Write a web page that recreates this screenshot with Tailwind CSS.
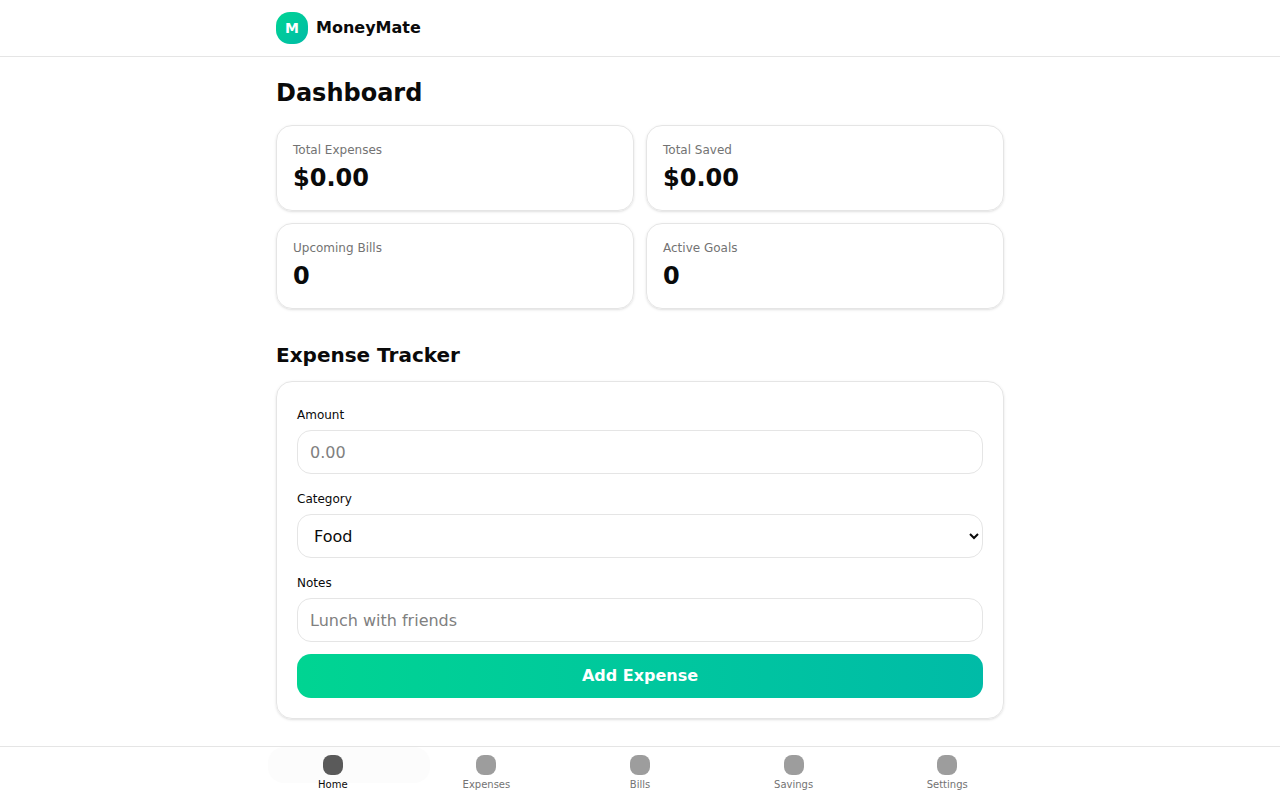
<!DOCTYPE html>
<html lang="en">
<head>
<meta charset="utf-8">
<meta name="viewport" content="width=device-width, initial-scale=1">
<title>MoneyMate</title>
<script src="https://cdn.jsdelivr.net/npm/@tailwindcss/browser@4"></script>
</head>
<body class="bg-white text-neutral-950 font-['DejaVu_Sans',sans-serif]">
  <header class="border-b border-neutral-200">
    <div class="mx-auto flex h-14 max-w-3xl items-center gap-2 px-5">
      <div class="flex size-8 items-center justify-center rounded-[14px] bg-linear-to-br from-emerald-400 to-teal-500 text-sm font-bold text-white">M</div>
      <span class="font-semibold">MoneyMate</span>
    </div>
  </header>

  <main class="mx-auto max-w-3xl px-5 pt-5 pb-20">
    <h1 class="mb-4 text-2xl font-bold">Dashboard</h1>
    <section class="grid grid-cols-2 gap-3">
      <div class="rounded-2xl border border-neutral-200 p-4 shadow-sm">
        <div class="text-xs text-neutral-500">Total Expenses</div>
        <div class="mt-1 text-2xl font-bold">$0.00</div>
      </div>
      <div class="rounded-2xl border border-neutral-200 p-4 shadow-sm">
        <div class="text-xs text-neutral-500">Total Saved</div>
        <div class="mt-1 text-2xl font-bold">$0.00</div>
      </div>
      <div class="rounded-2xl border border-neutral-200 p-4 shadow-sm">
        <div class="text-xs text-neutral-500">Upcoming Bills</div>
        <div class="mt-1 text-2xl font-bold">0</div>
      </div>
      <div class="rounded-2xl border border-neutral-200 p-4 shadow-sm">
        <div class="text-xs text-neutral-500">Active Goals</div>
        <div class="mt-1 text-2xl font-bold">0</div>
      </div>
    </section>

    <h2 class="mt-8 mb-3 text-xl font-semibold">Expense Tracker</h2>
    <form class="grid gap-3 rounded-2xl border border-neutral-200 p-5 shadow-sm">
      <div>
        <div class="mb-1"><label for="amount" class="text-xs">Amount</label></div>
        <input id="amount" type="text" inputmode="decimal" placeholder="0.00" class="block h-11 w-full rounded-[14px] border border-neutral-200 px-3 placeholder:text-[#808080]">
      </div>
      <div>
        <div class="mb-1"><label for="category" class="text-xs">Category</label></div>
        <select id="category" class="block h-11 w-full rounded-[14px] border border-neutral-200 bg-white px-3">
          <option>Food</option>
          <option>Transport</option>
          <option>Shopping</option>
          <option>Other</option>
        </select>
      </div>
      <div>
        <div class="mb-1"><label for="notes" class="text-xs">Notes</label></div>
        <input id="notes" type="text" placeholder="Lunch with friends" class="block h-11 w-full rounded-[14px] border border-neutral-200 px-3 placeholder:text-[#808080]">
      </div>
      <button type="button" class="h-11 rounded-[14px] bg-linear-to-r from-emerald-400 to-teal-500 font-semibold text-white">Add Expense</button>
    </form>
  </main>

  <nav class="fixed inset-x-0 bottom-0 border-t border-neutral-200 bg-white">
    <div class="relative mx-auto grid max-w-3xl grid-cols-5 py-2 text-[10px] leading-[15px]">
      <div class="absolute top-0 left-3 h-9 w-[162px] rounded-2xl bg-[#fcfcfc]"></div>
      <a href="#home" class="relative flex flex-col items-center gap-0.5 text-neutral-950"><span class="size-5 rounded-lg bg-[#5a5a5a]"></span>Home</a>
      <a href="#expenses" class="flex flex-col items-center gap-0.5 text-neutral-500"><span class="size-5 rounded-lg bg-[#9d9d9d]"></span>Expenses</a>
      <a href="#bills" class="flex flex-col items-center gap-0.5 text-neutral-500"><span class="size-5 rounded-lg bg-[#9d9d9d]"></span>Bills</a>
      <a href="#savings" class="flex flex-col items-center gap-0.5 text-neutral-500"><span class="size-5 rounded-lg bg-[#9d9d9d]"></span>Savings</a>
      <a href="#settings" class="flex flex-col items-center gap-0.5 text-neutral-500"><span class="size-5 rounded-lg bg-[#9d9d9d]"></span>Settings</a>
    </div>
  </nav>
</body>
</html>
